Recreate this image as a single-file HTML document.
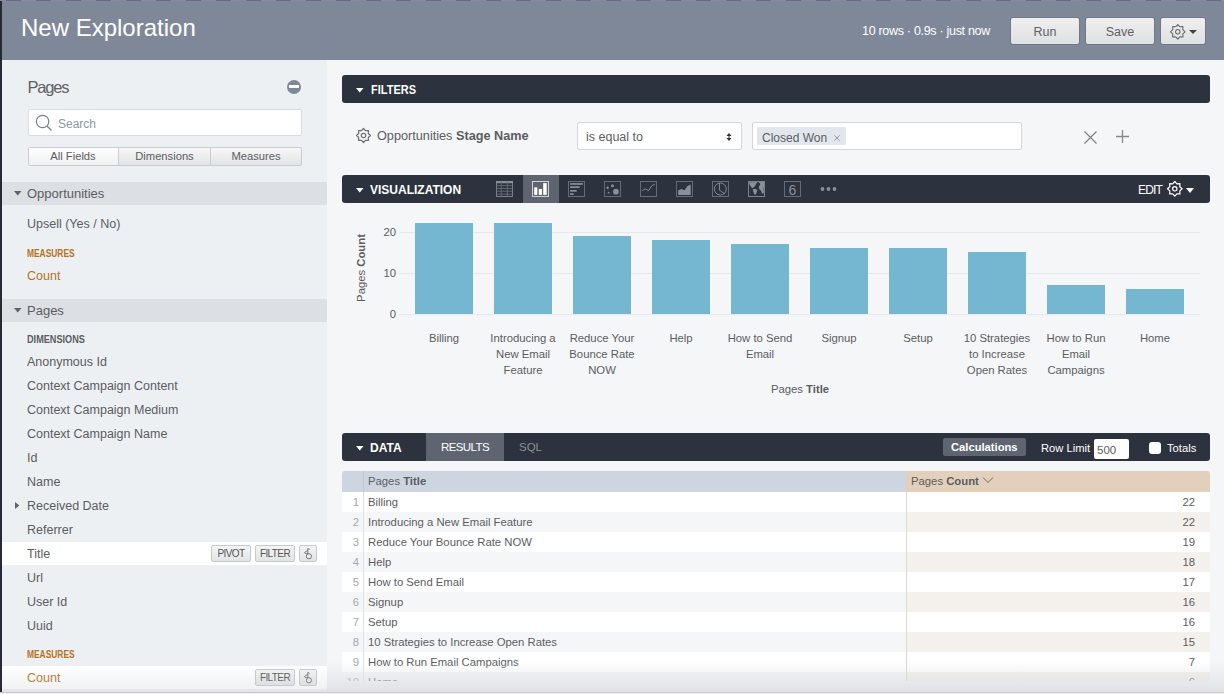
<!DOCTYPE html>
<html><head><meta charset="utf-8">
<style>
*{box-sizing:border-box;margin:0;padding:0}
html,body{width:1224px;height:694px;overflow:hidden;background:#f5f6f8;font-family:"Liberation Sans",sans-serif;color:#5b5d61}
.a{position:absolute;white-space:nowrap}
#topline{position:absolute;left:0;top:0;width:1224px;height:1px;background:repeating-linear-gradient(90deg,#8e86a4 0 6px,#6d6690 6px 21px,#8e86a4 21px 30px)}
#ledge{position:absolute;left:0;top:1px;width:2px;height:693px;background:#262b33}
#hdr{position:absolute;left:2px;top:1px;width:1222px;height:59px;background:#7f8898}
#side{position:absolute;left:2px;top:60px;width:325px;height:634px;background:#edf0f3;overflow:hidden}
.btn{position:absolute;height:26px;top:18px;box-shadow:0 0 0 1px #6f7888;border-radius:2px;background:linear-gradient(#efeff0,#dfe0e1);color:#606266;font-size:12.5px;text-align:center;line-height:28px}
.band{position:absolute;left:0;width:325px;height:23px;background:#dcdfe3}
.tri{position:absolute;width:0;height:0;border-left:3.75px solid transparent;border-right:3.75px solid transparent;border-top:4.4px solid #5b5d61}
.item{position:absolute;left:25px;font-size:12.5px;line-height:24px;height:24px;color:#5b5d61;white-space:nowrap}
.lbl{position:absolute;left:25px;font-size:9.8px;line-height:12px;font-weight:bold;color:#5b5d61;letter-spacing:-0.8px;white-space:nowrap}
.org{color:#b5721c}
.bar{position:absolute;left:342px;width:868px;height:28px;background:#2d333e;border-radius:3px}
.bt{position:absolute;color:#fff;font-weight:bold;font-size:12px;line-height:30px}
.wtri{position:absolute;width:0;height:0;border-left:3.75px solid transparent;border-right:3.75px solid transparent;border-top:4.2px solid #fff}
.rtri{position:absolute;width:0;height:0;border-top:3.5px solid transparent;border-bottom:3.5px solid transparent;border-left:4px solid #5b5d61}
.sb{position:absolute;height:17px;border:1px solid #c6c9cd;border-radius:2px;background:linear-gradient(#f4f4f4,#e3e4e5);font-size:10px;line-height:15px;text-align:center;color:#555;letter-spacing:-0.6px}
</style></head><body>
<div id="topline"></div>
<div id="hdr"></div>
<div id="ledge"></div>
<div class="a" style="left:21px;top:13px;font-size:24px;line-height:30px;color:#fff">New Exploration</div>
<div class="a" style="left:862px;top:23px;font-size:12.5px;line-height:16px;color:#fff;letter-spacing:-0.3px">10 rows · 0.9s · just now</div>
<div class="btn" style="left:1011px;width:68px">Run</div>
<div class="btn" style="left:1086px;width:68px">Save</div>
<div class="btn" style="left:1161px;width:44px"><svg style="position:absolute;left:8.10px;top:4.50px" width="17.6" height="17.6" viewBox="-8.80 -8.80 17.60 17.60"><path d="M0.00 -7.30 L2.07 -4.99 L5.16 -5.16 L4.99 -2.07 L7.30 0.00 L4.99 2.07 L5.16 5.16 L2.07 4.99 L0.00 7.30 L-2.07 4.99 L-5.16 5.16 L-4.99 2.07 L-7.30 0.00 L-4.99 -2.07 L-5.16 -5.16 L-2.07 -4.99 Z" fill="none" stroke="#646669" stroke-width="1.05" stroke-linejoin="round"/><circle cx="0" cy="0" r="2.2" fill="none" stroke="#646669" stroke-width="1.05"/></svg><div style="position:absolute;left:28px;top:12px;width:0;height:0;border-left:4px solid transparent;border-right:4px solid transparent;border-top:4px solid #444"></div></div>

<div id="side"></div>
<div class="a" style="left:27.5px;top:77px;font-size:16.5px;line-height:20px;color:#5f6165;letter-spacing:-1.2px">Pages</div>
<div class="a" style="left:286.6px;top:79.5px;width:14.8px;height:14.8px;border-radius:50%;background:#7f8898"></div>
<div class="a" style="left:289px;top:85.3px;width:9.8px;height:3px;background:#fff"></div>
<div class="a" style="left:27.5px;top:109px;width:274px;height:27px;background:#fff;border:1px solid #d9dce0;border-radius:2px"></div>
<svg class="a" style="left:34px;top:113px" width="20" height="20" viewBox="0 0 20 20"><circle cx="8.6" cy="8.5" r="6.2" fill="none" stroke="#7d8085" stroke-width="1.2"/><line x1="13" y1="13" x2="17.5" y2="17.5" stroke="#7d8085" stroke-width="1.3"/></svg>
<div class="a" style="left:58px;top:115.5px;font-size:12px;line-height:16px;color:#8b9aa0">Search</div>
<div class="a" style="left:27.5px;top:146.5px;width:274px;height:19px;border:1px solid #c9ccd0;border-radius:2px;background:linear-gradient(#f7f7f7,#e2e3e4)"></div>
<div class="a" style="left:28.5px;top:147.5px;width:90px;height:17px;background:linear-gradient(#fff,#f0f0f0)"></div>
<div class="a" style="left:118px;top:147px;width:1px;height:18px;background:#c9ccd0"></div>
<div class="a" style="left:210px;top:147px;width:1px;height:18px;background:#c9ccd0"></div>
<div class="a" style="left:28px;top:148px;width:90px;font-size:11.2px;line-height:16px;text-align:center;color:#5b5d61">All Fields</div>
<div class="a" style="left:119px;top:148px;width:91px;font-size:11.2px;line-height:16px;text-align:center;color:#5b5d61">Dimensions</div>
<div class="a" style="left:211px;top:148px;width:90px;font-size:11.2px;line-height:16px;text-align:center;color:#5b5d61">Measures</div>

<div class="band" style="left:2px;top:182px"></div>
<svg class="a" style="left:14px;top:191.3px" width="8" height="5" viewBox="0 0 8 5"><path d="M0 0 H7.5 L3.75 4.5Z" fill="#5f6267"/></svg>
<div class="item" style="left:27px;top:182px;line-height:23px;font-size:13px">Opportunities</div>
<div class="item" style="left:27px;top:212px">Upsell (Yes / No)</div>
<div class="lbl org" style="left:27px;top:247px;font-size:10.5px;letter-spacing:0;transform:scaleX(0.8);transform-origin:0 0">MEASURES</div>
<div class="item org" style="left:27px;top:264px">Count</div>
<div class="band" style="left:2px;top:299px"></div>
<svg class="a" style="left:14px;top:308.3px" width="8" height="5" viewBox="0 0 8 5"><path d="M0 0 H7.5 L3.75 4.5Z" fill="#5f6267"/></svg>
<div class="item" style="left:27px;top:299px;line-height:23px;font-size:13px">Pages</div>
<div class="lbl" style="left:27px;top:333px;font-size:10.5px;letter-spacing:0;transform:scaleX(0.87);transform-origin:0 0">DIMENSIONS</div>
<div class="item" style="left:27px;top:350px">Anonymous Id</div>
<div class="item" style="left:27px;top:374px">Context Campaign Content</div>
<div class="item" style="left:27px;top:398px">Context Campaign Medium</div>
<div class="item" style="left:27px;top:422px">Context Campaign Name</div>
<div class="item" style="left:27px;top:446px">Id</div>
<div class="item" style="left:27px;top:470px">Name</div>
<svg class="a" style="left:15px;top:502px" width="5" height="8" viewBox="0 0 5 8"><path d="M0 0 V7 L4.3 3.5Z" fill="#5f6267"/></svg>
<div class="item" style="left:27px;top:494px">Received Date</div>
<div class="item" style="left:27px;top:518px">Referrer</div>
<div class="a" style="left:2px;top:542px;width:325px;height:23px;background:#fff"></div>
<div class="item" style="left:27px;top:542px">Title</div>
<div class="sb" style="left:211px;top:545px;width:40px">PIVOT</div>
<div class="sb" style="left:255px;top:545px;width:40px">FILTER</div>
<div class="sb" style="left:299px;top:545px;width:18px"><svg style="position:absolute;left:0;top:0" width="16" height="15" viewBox="0 0 16 15"><path d="M7.8 2.6 L9.6 3.4 M7.8 2.4 V8 M7.8 4.2 L4.4 6.6 L6 7.7 L8.6 7.6" fill="none" stroke="#77797d" stroke-width="1"/><circle cx="8.9" cy="10.3" r="2.6" fill="none" stroke="#77797d" stroke-width="1"/></svg></div>
<div class="item" style="left:27px;top:566px">Url</div>
<div class="item" style="left:27px;top:590px">User Id</div>
<div class="item" style="left:27px;top:614px">Uuid</div>
<div class="lbl org" style="left:27px;top:648px;font-size:10.5px;letter-spacing:0;transform:scaleX(0.8);transform-origin:0 0">MEASURES</div>
<div class="a" style="left:2px;top:666px;width:325px;height:23px;background:#fff"></div>
<div class="item org" style="left:27px;top:666px">Count</div>
<div class="sb" style="left:255px;top:669px;width:40px">FILTER</div>
<div class="sb" style="left:299px;top:669px;width:18px"><svg style="position:absolute;left:0;top:0" width="16" height="15" viewBox="0 0 16 15"><path d="M7.8 2.6 L9.6 3.4 M7.8 2.4 V8 M7.8 4.2 L4.4 6.6 L6 7.7 L8.6 7.6" fill="none" stroke="#77797d" stroke-width="1"/><circle cx="8.9" cy="10.3" r="2.6" fill="none" stroke="#77797d" stroke-width="1"/></svg></div>

<div class="bar" style="top:75px"></div>
<svg class="a" style="left:356px;top:88px" width="8" height="5" viewBox="0 0 8 5"><path d="M0 0 H7.5 L3.75 4.5Z" fill="#fff"/></svg>
<div class="bt" style="left:371px;top:75px;font-size:12.5px;transform:scaleX(0.88);transform-origin:0 0">FILTERS</div>

<svg class="a" style="left:355.00px;top:127.00px" width="17.0" height="17.0" viewBox="-8.50 -8.50 17.00 17.00"><path d="M0.00 -7.00 L1.99 -4.80 L4.95 -4.95 L4.80 -1.99 L7.00 0.00 L4.80 1.99 L4.95 4.95 L1.99 4.80 L0.00 7.00 L-1.99 4.80 L-4.95 4.95 L-4.80 1.99 L-7.00 0.00 L-4.80 -1.99 L-4.95 -4.95 L-1.99 -4.80 Z" fill="none" stroke="#6a6d72" stroke-width="1.2" stroke-linejoin="round"/><circle cx="0" cy="0" r="2.2" fill="none" stroke="#6a6d72" stroke-width="1.2"/></svg>
<div class="a" style="left:377px;top:127.5px;font-size:12.7px;line-height:16px;color:#5b5d61">Opportunities <b>Stage Name</b></div>
<div class="a" style="left:577px;top:122px;width:165px;height:28px;background:#fff;border:1px solid #d3d6db;border-radius:2px"></div>
<div class="a" style="left:586px;top:129px;font-size:12.5px;line-height:16px;color:#5b5d61">is equal to</div>
<svg class="a" style="left:725.7px;top:132.5px" width="6" height="9" viewBox="0 0 6 9"><path d="M3 0 L5.6 3 H0.4 Z M3 8 L5.6 5 H0.4 Z" fill="#333"/><rect x="2.5" y="2.5" width="1" height="3" fill="#333"/></svg>
<div class="a" style="left:752px;top:122px;width:270px;height:28px;background:#fff;border:1px solid #d3d6db;border-radius:2px"></div>
<div class="a" style="left:757px;top:127px;width:89px;height:18px;background:#e3e7ed;border-radius:2px"></div>
<div class="a" style="left:762px;top:130px;font-size:12px;line-height:16px;color:#5b5d61">Closed Won</div>
<svg class="a" style="left:834px;top:134.5px" width="6" height="6" viewBox="0 0 6 6"><path d="M0.3 0.3 L5.7 5.7 M5.7 0.3 L0.3 5.7" stroke="#9a9da2" stroke-width="1"/></svg>
<svg class="a" style="left:1083.5px;top:131px" width="13" height="13" viewBox="0 0 13 13"><path d="M0.5 0.5 L12.5 12.5 M12.5 0.5 L0.5 12.5" stroke="#7a7d82" stroke-width="1.1"/></svg>
<svg class="a" style="left:1115.5px;top:130px" width="13" height="13" viewBox="0 0 13 13"><path d="M6.5 0 V13 M0 6.5 H13" stroke="#85888c" stroke-width="1.3"/></svg>

<div class="bar" style="top:175px"></div>
<svg class="a" style="left:356px;top:188px" width="8" height="5" viewBox="0 0 8 5"><path d="M0 0 H7.5 L3.75 4.5Z" fill="#fff"/></svg>
<div class="bt" style="left:370px;top:175px">VISUALIZATION</div>
<div class="a" style="left:523px;top:175px;width:36px;height:28px;background:#5f6570"></div>
<svg class="a" style="left:496px;top:181px" width="17" height="16" viewBox="0 0 17 16"><rect x="0.5" y="0.5" width="16" height="15" fill="none" stroke="#7b808a" stroke-width="1"/><rect x="0" y="0" width="17" height="2.2" fill="#8a8f98"/><line x1="0.5" y1="4.6" x2="16.5" y2="4.6" stroke="#666c77" stroke-width="0.9"/><line x1="0.5" y1="7.4" x2="16.5" y2="7.4" stroke="#666c77" stroke-width="0.9"/><line x1="0.5" y1="10.2" x2="16.5" y2="10.2" stroke="#666c77" stroke-width="0.9"/><line x1="0.5" y1="13.2" x2="16.5" y2="13.2" stroke="#666c77" stroke-width="0.9"/><line x1="5.3" y1="0.5" x2="5.3" y2="15.5" stroke="#666c77" stroke-width="0.9"/><line x1="11.4" y1="0.5" x2="11.4" y2="15.5" stroke="#666c77" stroke-width="0.9"/></svg>
<svg class="a" style="left:532px;top:181px" width="17" height="16" viewBox="0 0 17 16"><rect x="0.5" y="0.5" width="16" height="15" fill="none" stroke="#cfd2d7" stroke-width="1"/><rect x="2.2" y="6.3" width="3.1" height="7.6" fill="#fff"/><rect x="6.8" y="8" width="3.2" height="5.9" fill="#fff"/><rect x="11.2" y="2.1" width="3.5" height="11.8" fill="#fff"/></svg>
<svg class="a" style="left:568px;top:181px" width="17" height="16" viewBox="0 0 17 16"><rect x="0.5" y="0.5" width="16" height="15" fill="none" stroke="#666c77" stroke-width="1"/><rect x="2.1" y="2.1" width="12.8" height="1.7" fill="#8a8f98"/><rect x="2.1" y="5.3" width="9.6" height="1.7" fill="#8a8f98"/><rect x="2.1" y="9" width="6.6" height="1.7" fill="#8a8f98"/><rect x="2.1" y="12.2" width="3.5" height="1.7" fill="#8a8f98"/></svg>
<svg class="a" style="left:604px;top:181px" width="17" height="16" viewBox="0 0 17 16"><rect x="0.5" y="0.5" width="16" height="15" fill="none" stroke="#666c77" stroke-width="1"/><circle cx="3.6" cy="6.8" r="1.2" fill="#8a8f98"/><circle cx="8.5" cy="4.8" r="1.5" fill="#8a8f98"/><circle cx="4.6" cy="11.7" r="0.9" fill="#8a8f98"/><circle cx="11.9" cy="10.7" r="2.9" fill="#8a8f98"/></svg>
<svg class="a" style="left:640px;top:181px" width="17" height="16" viewBox="0 0 17 16"><rect x="0.5" y="0.5" width="16" height="15" fill="none" stroke="#666c77" stroke-width="1"/><path d="M2.1 9.7 L5.3 7.8 L8.5 9.7 L11.7 4.8 L14.9 3.1" fill="none" stroke="#8a8f98" stroke-width="0.9" stroke-linejoin="round"/></svg>
<svg class="a" style="left:676px;top:181px" width="17" height="16" viewBox="0 0 17 16"><rect x="0.5" y="0.5" width="16" height="15" fill="none" stroke="#666c77" stroke-width="1"/><path d="M2.2 9.2 L5.3 8 L8.5 9.2 L11.5 5.1 L14.7 3.4 V13.9 H2.2 Z" fill="#8a8f98"/></svg>
<svg class="a" style="left:712px;top:181px" width="17" height="16" viewBox="0 0 17 16"><rect x="0.5" y="0.5" width="16" height="15" fill="none" stroke="#666c77" stroke-width="1"/><circle cx="8.3" cy="8" r="6" fill="none" stroke="#8a8f98" stroke-width="0.9"/><path d="M7.5 2.1 V9.2 L12.7 12.9" fill="none" stroke="#8a8f98" stroke-width="0.9"/></svg>
<svg class="a" style="left:748px;top:181px" width="17" height="16" viewBox="0 0 17 16"><rect x="0.5" y="0.5" width="16" height="15" fill="none" stroke="#7b808a" stroke-width="1"/><path fill="#8a8f98" d="M1 1.2 L9.5 1 L8 3 L7 5 L5.5 6.5 L4 7.2 L2.5 5 L1.2 3 Z M5 8 L8 8 L9.2 9.5 L8.5 12 L7 14.3 L6 12.5 L5 10 Z M10.5 1 L16 1 V6 L15.5 8 L16 11 L15 13 L13.8 12 L13 9.5 L11.5 8.5 L10.8 6.5 L11.5 4.5 L12.5 3 Z"/></svg>
<svg class="a" style="left:784px;top:181px" width="17" height="16" viewBox="0 0 17 16"><rect x="0.5" y="0.5" width="16" height="15" fill="none" stroke="#666c77" stroke-width="1"/><text x="8.5" y="13.6" text-anchor="middle" font-family="Liberation Sans" font-size="14" fill="#8a8f98">6</text></svg>
<svg class="a" style="left:820px;top:186px" width="18" height="6" viewBox="0 0 18 6"><circle cx="2.5" cy="3" r="1.9" fill="#8a8f98"/><circle cx="8.5" cy="3" r="1.9" fill="#8a8f98"/><circle cx="14.5" cy="3" r="1.9" fill="#8a8f98"/></svg>
<div class="a" style="left:1138px;top:182px;font-size:12px;line-height:16px;color:#fff;letter-spacing:-0.8px">EDIT</div>
<svg class="a" style="left:1166.20px;top:180.20px" width="17.6" height="17.6" viewBox="-8.80 -8.80 17.60 17.60"><path d="M0.00 -7.30 L2.07 -4.99 L5.16 -5.16 L4.99 -2.07 L7.30 0.00 L4.99 2.07 L5.16 5.16 L2.07 4.99 L0.00 7.30 L-2.07 4.99 L-5.16 5.16 L-4.99 2.07 L-7.30 0.00 L-4.99 -2.07 L-5.16 -5.16 L-2.07 -4.99 Z" fill="none" stroke="#fff" stroke-width="1.2" stroke-linejoin="round"/><circle cx="0" cy="0" r="2.2" fill="none" stroke="#fff" stroke-width="1.2"/></svg>
<div class="a" style="left:1185.8px;top:188px;width:0;height:0;border-left:4.7px solid transparent;border-right:4.7px solid transparent;border-top:5.4px solid #fff"></div>

<div class="a" style="left:399px;top:231.5px;width:801px;height:1px;background:#e6e8eb"></div>
<div class="a" style="left:399px;top:272.5px;width:801px;height:1px;background:#e6e8eb"></div>
<div class="a" style="left:399px;top:313.5px;width:801px;height:1px;background:#e6e8eb"></div>
<div class="a" style="left:366px;top:223.5px;width:30px;text-align:right;font-size:11.3px;line-height:16px;color:#5b5d61">20</div>
<div class="a" style="left:366px;top:264.5px;width:30px;text-align:right;font-size:11.3px;line-height:16px;color:#5b5d61">10</div>
<div class="a" style="left:366px;top:305.5px;width:30px;text-align:right;font-size:11.3px;line-height:16px;color:#5b5d61">0</div>
<div class="a" style="left:415px;top:223.1px;width:58px;height:90.9px;background:#75b6d0"></div>
<div class="a" style="left:394px;top:330px;width:100px;text-align:center;font-size:11.3px;line-height:16px;color:#5b5d61;white-space:normal">Billing</div>
<div class="a" style="left:494px;top:223.1px;width:58px;height:90.9px;background:#75b6d0"></div>
<div class="a" style="left:473px;top:330px;width:100px;text-align:center;font-size:11.3px;line-height:16px;color:#5b5d61;white-space:normal">Introducing a<br>New Email<br>Feature</div>
<div class="a" style="left:573px;top:235.5px;width:58px;height:78.5px;background:#75b6d0"></div>
<div class="a" style="left:552px;top:330px;width:100px;text-align:center;font-size:11.3px;line-height:16px;color:#5b5d61;white-space:normal">Reduce Your<br>Bounce Rate<br>NOW</div>
<div class="a" style="left:652px;top:239.7px;width:58px;height:74.3px;background:#75b6d0"></div>
<div class="a" style="left:631px;top:330px;width:100px;text-align:center;font-size:11.3px;line-height:16px;color:#5b5d61;white-space:normal">Help</div>
<div class="a" style="left:731px;top:243.8px;width:58px;height:70.2px;background:#75b6d0"></div>
<div class="a" style="left:710px;top:330px;width:100px;text-align:center;font-size:11.3px;line-height:16px;color:#5b5d61;white-space:normal">How to Send<br>Email</div>
<div class="a" style="left:810px;top:247.9px;width:58px;height:66.1px;background:#75b6d0"></div>
<div class="a" style="left:789px;top:330px;width:100px;text-align:center;font-size:11.3px;line-height:16px;color:#5b5d61;white-space:normal">Signup</div>
<div class="a" style="left:889px;top:247.9px;width:58px;height:66.1px;background:#75b6d0"></div>
<div class="a" style="left:868px;top:330px;width:100px;text-align:center;font-size:11.3px;line-height:16px;color:#5b5d61;white-space:normal">Setup</div>
<div class="a" style="left:968px;top:252.1px;width:58px;height:61.9px;background:#75b6d0"></div>
<div class="a" style="left:947px;top:330px;width:100px;text-align:center;font-size:11.3px;line-height:16px;color:#5b5d61;white-space:normal">10 Strategies<br>to Increase<br>Open Rates</div>
<div class="a" style="left:1047px;top:285.1px;width:58px;height:28.9px;background:#75b6d0"></div>
<div class="a" style="left:1026px;top:330px;width:100px;text-align:center;font-size:11.3px;line-height:16px;color:#5b5d61;white-space:normal">How to Run<br>Email<br>Campaigns</div>
<div class="a" style="left:1126px;top:289.2px;width:58px;height:24.8px;background:#75b6d0"></div>
<div class="a" style="left:1105px;top:330px;width:100px;text-align:center;font-size:11.3px;line-height:16px;color:#5b5d61;white-space:normal">Home</div>
<div class="a" style="left:700px;top:381px;width:200px;text-align:center;font-size:11.3px;line-height:16px;color:#5b5d61">Pages <b>Title</b></div>
<div class="a" style="left:361px;top:268px;width:0;height:0"><div style="position:absolute;left:-50px;top:-8px;width:100px;height:16px;text-align:center;font-size:11.3px;line-height:16px;color:#5b5d61;transform:rotate(-90deg)">Pages <b>Count</b></div></div>

<div class="bar" style="top:433px"></div>
<svg class="a" style="left:356px;top:446px" width="8" height="5" viewBox="0 0 8 5"><path d="M0 0 H7.5 L3.75 4.5Z" fill="#fff"/></svg>
<div class="bt" style="left:370px;top:433px">DATA</div>
<div class="a" style="left:426px;top:433px;width:78px;height:28px;background:#5f6570"></div>
<div class="a" style="left:441px;top:433px;font-size:11.5px;line-height:28px;color:#fff;letter-spacing:-0.6px">RESULTS</div>
<div class="a" style="left:519px;top:433px;font-size:11.5px;line-height:28px;color:#8a8f98">SQL</div>
<div class="a" style="left:943px;top:438px;width:83px;height:18px;background:#5f6570;border-radius:2px"></div>
<div class="a" style="left:951px;top:439px;font-size:11.2px;line-height:16px;color:#fff;font-weight:bold">Calculations</div>
<div class="a" style="left:1041px;top:440px;font-size:11.2px;line-height:16px;color:#fff">Row Limit</div>
<div class="a" style="left:1094px;top:439px;width:35px;height:20px;background:#fff;border-radius:2px"></div>
<div class="a" style="left:1097px;top:441.5px;font-size:11.5px;line-height:16px;color:#5b5d61">500</div>
<div class="a" style="left:1149px;top:442px;width:12px;height:12px;background:#fff;border-radius:3px"></div>
<div class="a" style="left:1167px;top:440px;font-size:11.2px;line-height:16px;color:#fff">Totals</div>

<div class="a" style="left:342px;top:471px;width:564px;height:21px;background:#cdd6e0;border-top-left-radius:3px"></div>
<div class="a" style="left:906px;top:471px;width:304px;height:21px;background:#e3d0bc;border-top-right-radius:3px"></div>
<div class="a" style="left:368px;top:473px;font-size:11.3px;line-height:16px;color:#5b5d61">Pages <b>Title</b></div>
<div class="a" style="left:911px;top:473px;font-size:11.3px;line-height:16px;color:#5b5d61">Pages <b>Count</b></div>
<svg class="a" style="left:982px;top:476px" width="12" height="8" viewBox="0 0 12 8"><path d="M1 1.5 L6 6.5 L11 1.5" fill="none" stroke="#6a6d72" stroke-width="1"/></svg>
<div class="a" style="left:342px;top:492px;width:868px;height:189px;overflow:hidden">
<div class="a" style="left:0;top:0px;width:564px;height:20px;background:#fff"></div><div class="a" style="left:564px;top:0px;width:304px;height:20px;background:#fff"></div><div class="a" style="left:0;top:2px;width:17px;text-align:right;font-size:11.3px;line-height:16px;color:#a4a7ab">1</div><div class="a" style="left:26px;top:2px;font-size:11.3px;line-height:16px;color:#5b5d61">Billing</div><div class="a" style="left:764px;top:2px;width:89px;text-align:right;font-size:11.3px;line-height:16px;color:#5b5d61">22</div>
<div class="a" style="left:0;top:20px;width:564px;height:20px;background:#f5f6f8"></div><div class="a" style="left:564px;top:20px;width:304px;height:20px;background:#f4f1ec"></div><div class="a" style="left:0;top:22px;width:17px;text-align:right;font-size:11.3px;line-height:16px;color:#a4a7ab">2</div><div class="a" style="left:26px;top:22px;font-size:11.3px;line-height:16px;color:#5b5d61">Introducing a New Email Feature</div><div class="a" style="left:764px;top:22px;width:89px;text-align:right;font-size:11.3px;line-height:16px;color:#5b5d61">22</div>
<div class="a" style="left:0;top:40px;width:564px;height:20px;background:#fff"></div><div class="a" style="left:564px;top:40px;width:304px;height:20px;background:#fff"></div><div class="a" style="left:0;top:42px;width:17px;text-align:right;font-size:11.3px;line-height:16px;color:#a4a7ab">3</div><div class="a" style="left:26px;top:42px;font-size:11.3px;line-height:16px;color:#5b5d61">Reduce Your Bounce Rate NOW</div><div class="a" style="left:764px;top:42px;width:89px;text-align:right;font-size:11.3px;line-height:16px;color:#5b5d61">19</div>
<div class="a" style="left:0;top:60px;width:564px;height:20px;background:#f5f6f8"></div><div class="a" style="left:564px;top:60px;width:304px;height:20px;background:#f4f1ec"></div><div class="a" style="left:0;top:62px;width:17px;text-align:right;font-size:11.3px;line-height:16px;color:#a4a7ab">4</div><div class="a" style="left:26px;top:62px;font-size:11.3px;line-height:16px;color:#5b5d61">Help</div><div class="a" style="left:764px;top:62px;width:89px;text-align:right;font-size:11.3px;line-height:16px;color:#5b5d61">18</div>
<div class="a" style="left:0;top:80px;width:564px;height:20px;background:#fff"></div><div class="a" style="left:564px;top:80px;width:304px;height:20px;background:#fff"></div><div class="a" style="left:0;top:82px;width:17px;text-align:right;font-size:11.3px;line-height:16px;color:#a4a7ab">5</div><div class="a" style="left:26px;top:82px;font-size:11.3px;line-height:16px;color:#5b5d61">How to Send Email</div><div class="a" style="left:764px;top:82px;width:89px;text-align:right;font-size:11.3px;line-height:16px;color:#5b5d61">17</div>
<div class="a" style="left:0;top:100px;width:564px;height:20px;background:#f5f6f8"></div><div class="a" style="left:564px;top:100px;width:304px;height:20px;background:#f4f1ec"></div><div class="a" style="left:0;top:102px;width:17px;text-align:right;font-size:11.3px;line-height:16px;color:#a4a7ab">6</div><div class="a" style="left:26px;top:102px;font-size:11.3px;line-height:16px;color:#5b5d61">Signup</div><div class="a" style="left:764px;top:102px;width:89px;text-align:right;font-size:11.3px;line-height:16px;color:#5b5d61">16</div>
<div class="a" style="left:0;top:120px;width:564px;height:20px;background:#fff"></div><div class="a" style="left:564px;top:120px;width:304px;height:20px;background:#fff"></div><div class="a" style="left:0;top:122px;width:17px;text-align:right;font-size:11.3px;line-height:16px;color:#a4a7ab">7</div><div class="a" style="left:26px;top:122px;font-size:11.3px;line-height:16px;color:#5b5d61">Setup</div><div class="a" style="left:764px;top:122px;width:89px;text-align:right;font-size:11.3px;line-height:16px;color:#5b5d61">16</div>
<div class="a" style="left:0;top:140px;width:564px;height:20px;background:#f5f6f8"></div><div class="a" style="left:564px;top:140px;width:304px;height:20px;background:#f4f1ec"></div><div class="a" style="left:0;top:142px;width:17px;text-align:right;font-size:11.3px;line-height:16px;color:#a4a7ab">8</div><div class="a" style="left:26px;top:142px;font-size:11.3px;line-height:16px;color:#5b5d61">10 Strategies to Increase Open Rates</div><div class="a" style="left:764px;top:142px;width:89px;text-align:right;font-size:11.3px;line-height:16px;color:#5b5d61">15</div>
<div class="a" style="left:0;top:160px;width:564px;height:20px;background:#fff"></div><div class="a" style="left:564px;top:160px;width:304px;height:20px;background:#fff"></div><div class="a" style="left:0;top:162px;width:17px;text-align:right;font-size:11.3px;line-height:16px;color:#a4a7ab">9</div><div class="a" style="left:26px;top:162px;font-size:11.3px;line-height:16px;color:#5b5d61">How to Run Email Campaigns</div><div class="a" style="left:764px;top:162px;width:89px;text-align:right;font-size:11.3px;line-height:16px;color:#5b5d61">7</div>
<div class="a" style="left:0;top:180px;width:564px;height:20px;background:#f5f6f8"></div><div class="a" style="left:564px;top:180px;width:304px;height:20px;background:#f4f1ec"></div><div class="a" style="left:0;top:182px;width:17px;text-align:right;font-size:11.3px;line-height:16px;color:#a4a7ab">10</div><div class="a" style="left:26px;top:182px;font-size:11.3px;line-height:16px;color:#5b5d61">Home</div><div class="a" style="left:764px;top:182px;width:89px;text-align:right;font-size:11.3px;line-height:16px;color:#5b5d61">6</div>
<div class="a" style="left:21px;top:-21px;width:1px;height:210px;background:#dde0e4"></div><div class="a" style="left:564px;top:0;width:1px;height:189px;background:#dcd8d2"></div></div>
<div class="a" style="left:363px;top:471px;width:1px;height:21px;background:#c0c9d3"></div>
<div class="a" style="left:2px;top:666px;width:325px;height:26px;background:linear-gradient(rgba(200,203,208,0),rgba(200,203,208,0.3))"></div>
<div class="a" style="left:327px;top:662px;width:897px;height:30px;background:linear-gradient(rgba(220,222,226,0),rgba(220,222,226,0.85))"></div>
<div class="a" style="left:0;top:692px;width:1224px;height:1px;background:#c8cacf"></div>
<div class="a" style="left:0;top:693px;width:1224px;height:1px;background:#f0f1f3"></div>
</body></html>
